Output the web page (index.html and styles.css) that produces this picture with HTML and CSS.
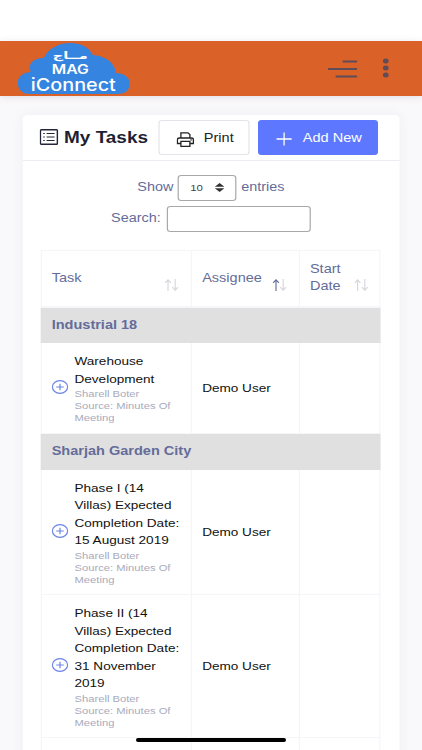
FILE: index.html
```
<!DOCTYPE html>
<html lang="en">
<head>
<meta charset="UTF-8">
<meta name="viewport" content="width=device-width, initial-scale=1.0">
<title>My Tasks - MAG iConnect</title>
<link rel="stylesheet" href="styles.css">
</head>
<body>
<div class="page">
  <header class="topbar">
    <svg class="logo" viewBox="0 0 113 54" preserveAspectRatio="none">
      <path fill="#3584e0" d="M13 53C5 53 1 48 1 42C1 35 7 31 14 31C10 23 17 17 27 17C31 8 41 2 54 2C65 2 73 7 76 14C88 15 98 21 99 32C107 32 113 36 113 43C113 49 108 53 101 53Z"/>
      <text class="logo-ar" x="36" y="18.5" textLength="35" lengthAdjust="spacingAndGlyphs">مــاج</text>
      <text class="logo-mag" x="35" y="33.5" textLength="37" lengthAdjust="spacingAndGlyphs">MAG</text>
      <text class="logo-name" x="14" y="50" textLength="85" lengthAdjust="spacingAndGlyphs">iConnect</text>
    </svg>
    <div class="topbar-tools">
      <svg class="icon-menu" viewBox="0 0 30 18" preserveAspectRatio="none">
        <path fill="none" stroke="#5e4c58" stroke-width="1.9" d="M15 1.5H29.5M.5 9H29.5M8 16.5H29.5"/>
      </svg>
      <svg class="icon-more" viewBox="0 0 6 20" preserveAspectRatio="none">
        <g fill="#5e4c58">
          <ellipse cx="3" cy="3" rx="2.9" ry="2.5"/>
          <ellipse cx="3" cy="10" rx="2.9" ry="2.5"/>
          <ellipse cx="3" cy="17" rx="2.9" ry="2.5"/>
        </g>
      </svg>
    </div>
  </header>

  <main class="card">
    <div class="card-head">
      <svg class="icon-list" viewBox="0 0 18 16" preserveAspectRatio="none">
        <rect x=".8" y=".8" width="16.4" height="14.4" rx=".8" fill="none" stroke="#24243a" stroke-width="1.4"/>
        <path fill="none" stroke="#24243a" stroke-width="1.2" d="M3.5 4.5H5M6.8 4.5H14.5M3.5 8H5M6.8 8H14.5M3.5 11.5H5M6.8 11.5H14.5"/>
      </svg>
      <h3>My Tasks</h3>
      <button class="btn btn-print">
        <svg class="icon-print" viewBox="0 0 18 15" preserveAspectRatio="none" fill="none" stroke="#222" stroke-width="1.3">
          <path d="M4.5 6V.8H11.5L13.5 2.5V6M4.5 11.5H1V7.8Q1 6 3 6H15Q17 6 17 7.8V11.5H13.5M4.5 9.3H13.5V14.3H4.5Z"/>
          <path d="M14 7.8H15.4"/>
        </svg>
        <span>Print</span>
      </button>
      <button class="btn btn-add">
        <svg class="icon-plus" viewBox="0 0 16 14" preserveAspectRatio="none">
          <path fill="none" stroke="#fff" stroke-width="1.3" d="M8 .5V13.5M.5 7H15.5"/>
        </svg>
        <span>Add New</span>
      </button>
    </div>

    <div class="card-body">
      <div class="filter">
        <span>Show</span>
        <div class="length-select">
          <span>10</span>
          <svg class="icon-sort" viewBox="0 0 9 10" preserveAspectRatio="none">
            <path fill="#333" d="M0 4.3L4.5 0L9 4.3ZM0 5.7L4.5 10L9 5.7Z"/>
          </svg>
        </div>
        <span>entries</span>
      </div>
      <div class="filter filter-search">
        <label for="search">Search:</label>
        <input id="search" type="text">
      </div>

      <table class="tasks">
        <colgroup><col class="col-task"><col class="col-user"><col class="col-date"></colgroup>
        <thead>
          <tr>
            <th><div class="th"><span>Task</span>
              <svg class="arrows" viewBox="0 0 14 12" preserveAspectRatio="none"><path d="M3.5 12V1M.7 3.8L3.5 .8L6.3 3.8"/><path d="M10.5 0V11M7.7 8.2L10.5 11.2L13.3 8.2"/></svg></div></th>
            <th><div class="th"><span>Assignee</span>
              <svg class="arrows asc" viewBox="0 0 14 12" preserveAspectRatio="none"><path d="M3.5 12V1M.7 3.8L3.5 .8L6.3 3.8"/><path d="M10.5 0V11M7.7 8.2L10.5 11.2L13.3 8.2"/></svg></div></th>
            <th><div class="th"><span>Start<br>Date</span>
              <svg class="arrows" viewBox="0 0 14 12" preserveAspectRatio="none"><path d="M3.5 12V1M.7 3.8L3.5 .8L6.3 3.8"/><path d="M10.5 0V11M7.7 8.2L10.5 11.2L13.3 8.2"/></svg></div></th>
          </tr>
        </thead>
        <tbody>
          <tr class="group"><td colspan="3">Industrial 18</td></tr>
          <tr>
            <td>
              <div class="task">
                <svg class="expand" viewBox="0 0 17 14" preserveAspectRatio="none"><ellipse cx="8.5" cy="7" rx="7.7" ry="6.3"/><path d="M8.5 3.7V10.3M4.7 7H12.3"/></svg>
                <div>Warehouse<br>Development
                  <small>Sharell Boter<br>Source: Minutes Of<br>Meeting</small></div>
              </div>
            </td>
            <td>Demo User</td>
            <td></td>
          </tr>
          <tr class="group"><td colspan="3">Sharjah Garden City</td></tr>
          <tr>
            <td>
              <div class="task">
                <svg class="expand" viewBox="0 0 17 14" preserveAspectRatio="none"><ellipse cx="8.5" cy="7" rx="7.7" ry="6.3"/><path d="M8.5 3.7V10.3M4.7 7H12.3"/></svg>
                <div>Phase I (14<br>Villas) Expected<br>Completion Date:<br>15 August 2019
                  <small>Sharell Boter<br>Source: Minutes Of<br>Meeting</small></div>
              </div>
            </td>
            <td>Demo User</td>
            <td></td>
          </tr>
          <tr>
            <td>
              <div class="task">
                <svg class="expand" viewBox="0 0 17 14" preserveAspectRatio="none"><ellipse cx="8.5" cy="7" rx="7.7" ry="6.3"/><path d="M8.5 3.7V10.3M4.7 7H12.3"/></svg>
                <div>Phase II (14<br>Villas) Expected<br>Completion Date:<br>31 November<br>2019
                  <small>Sharell Boter<br>Source: Minutes Of<br>Meeting</small></div>
              </div>
            </td>
            <td>Demo User</td>
            <td></td>
          </tr>
          <tr class="next"><td></td><td></td><td></td></tr>
        </tbody>
      </table>
    </div>
  </main>
</div>
<div class="home-bar"></div>
</body>
</html>
```

FILE: styles.css
```
* {
  box-sizing: border-box;
}
body {
  margin: 0;
  height: 750px;
  overflow: hidden;
  background: #f9f8fa;
  font-family: "Liberation Sans", Arial, sans-serif;
  font-size: 11.3px;
  color: #111;
}
/* wide look: everything is laid out narrow and stretched sideways */
.page {
  width: calc(100% / 1.2);
  height: 750px;
  overflow: hidden;
  padding-top: 41px;
  transform: scaleX(1.2);
  transform-origin: 0 0;
  background: linear-gradient(#fff 41px, transparent 41px);
}
svg {
  display: block;
  flex: none;
}

/* top bar */
.topbar {
  display: flex;
  align-items: flex-start;
  justify-content: space-between;
  height: 55px;
  padding: 0 27.5px 0 14.2px;
  background: #da6127;
  box-shadow: 0 1px 6px rgba(80, 70, 110, 0.15);
}
.logo {
  width: 94.2px;
  height: 54px;
}
.logo text {
  fill: #fff;
  font-family: Inter, "Liberation Sans", sans-serif;
  font-weight: 600;
}
.logo .logo-ar {
  font-family: "DejaVu Sans", sans-serif;
  font-size: 10.5px;
  font-weight: bold;
}
.logo .logo-mag {
  font-size: 12.5px;
}
.logo .logo-name {
  font-size: 17px;
  font-weight: 500;
}
.topbar-tools {
  display: flex;
  align-items: center;
  gap: 21px;
  height: 55px;
}
.icon-menu {
  width: 25px;
  height: 18px;
}
.icon-more {
  width: 5px;
  height: 20px;
  margin-top: -1px;
}

/* card */
.card {
  height: 700px;
  margin: 19px 19px 0 19.2px;
  background: #fff;
  border-radius: 4px;
  box-shadow: 0 0 12px rgba(82, 63, 105, 0.05);
}
.card-head {
  display: flex;
  align-items: center;
  height: 46px;
  padding: 0 17px 0 14.2px;
  border-bottom: 1px solid #ebedf2;
}
.card-head h3 {
  margin: 0 0 0 4.5px;
  width: 79px;
  font-size: 15.8px;
  color: #1f1f33;
  white-space: nowrap;
}
.icon-list {
  width: 15.5px;
  height: 16px;
  margin-top: -1px;
}
.btn {
  display: flex;
  align-items: center;
  height: 35px;
  padding: 0;
  border: 1px solid #e2e4ea;
  border-radius: 3px;
  font: 12.1px "Liberation Sans", Arial, sans-serif;
  white-space: nowrap;
}
.btn svg {
  margin-top: 3px;
}
.btn-print {
  width: 76px;
  padding-left: 14px;
  gap: 7.5px;
  background: #fff;
  color: #222;
}
.btn-add {
  width: 100.5px;
  margin-left: 6.5px;
  padding-left: 14.5px;
  gap: 8.5px;
  border-color: #5d78ff;
  background: #5d78ff;
  color: #fff;
}
.icon-print {
  width: 15px;
  height: 15px;
}
.icon-plus {
  width: 13.5px;
  height: 14px;
}

.card-body {
  padding: 13px 14.8px 0 14.4px;
}
.filter {
  display: flex;
  align-items: center;
  justify-content: center;
  gap: 4px;
  height: 27px;
  font-size: 12px;
  color: #646c9a;
}
.filter-search {
  gap: 5px;
  margin-top: 4px;
}
.filter > span,
.filter label {
  position: relative;
  top: -1px;
}
.length-select {
  display: flex;
  align-items: center;
  justify-content: space-between;
  width: 48.5px;
  height: 26px;
  padding: 0 9px;
  border: 1px solid #a8a8a8;
  border-radius: 3px;
  font-size: 9.5px;
  color: #444;
}
.icon-sort {
  width: 8px;
  height: 9px;
}
.filter input {
  width: 120px;
  height: 26px;
  border: 1px solid #a8a8a8;
  border-radius: 3px;
  background: #fff;
}

/* tasks table */
.tasks {
  width: 283.8px;
  margin-top: 18px;
  border-collapse: collapse;
  table-layout: fixed;
}
.col-task {
  width: 125.4px;
}
.col-user {
  width: 89.8px;
}
.tasks th,
.tasks td {
  padding: 10px 0 8.5px 8.5px;
  border: 1px solid #f6f6fa;
  text-align: left;
  line-height: 17.5px;
}
.tasks th {
  height: 56px;
  padding: 0 9.5px 0 8.5px;
  border-bottom-width: 2px;
  font-size: 12.1px;
  font-weight: normal;
  color: #646c9a;
}
.th {
  display: flex;
  align-items: center;
  justify-content: space-between;
}
.arrows {
  width: 12px;
  height: 12px;
  margin-top: 13px;
  fill: none;
  stroke: #d6d6de;
  stroke-width: 1.1;
}
.asc path:first-child {
  stroke: #646c9a;
}
.tasks .group td {
  height: 36px;
  padding: 2px 0 0 8.5px;
  border-color: #e0e0e0;
  background: #e0e0e0;
  font-size: 12.1px;
  font-weight: bold;
  color: #646c9a;
}
.task {
  display: flex;
  align-items: center;
  gap: 5px;
}
.task small {
  display: block;
  font-size: 9.35px;
  line-height: 12px;
  color: #a7abbd;
}
.expand {
  width: 14px;
  height: 14px;
  margin-top: -3px;
  fill: none;
  stroke: #6b83e6;
  stroke-width: 1.2;
}
.tasks .next td {
  height: 60px;
}

.home-bar {
  position: fixed;
  left: 136px;
  bottom: 8px;
  width: 150px;
  height: 4px;
  border-radius: 2px;
  background: #000;
}
```
